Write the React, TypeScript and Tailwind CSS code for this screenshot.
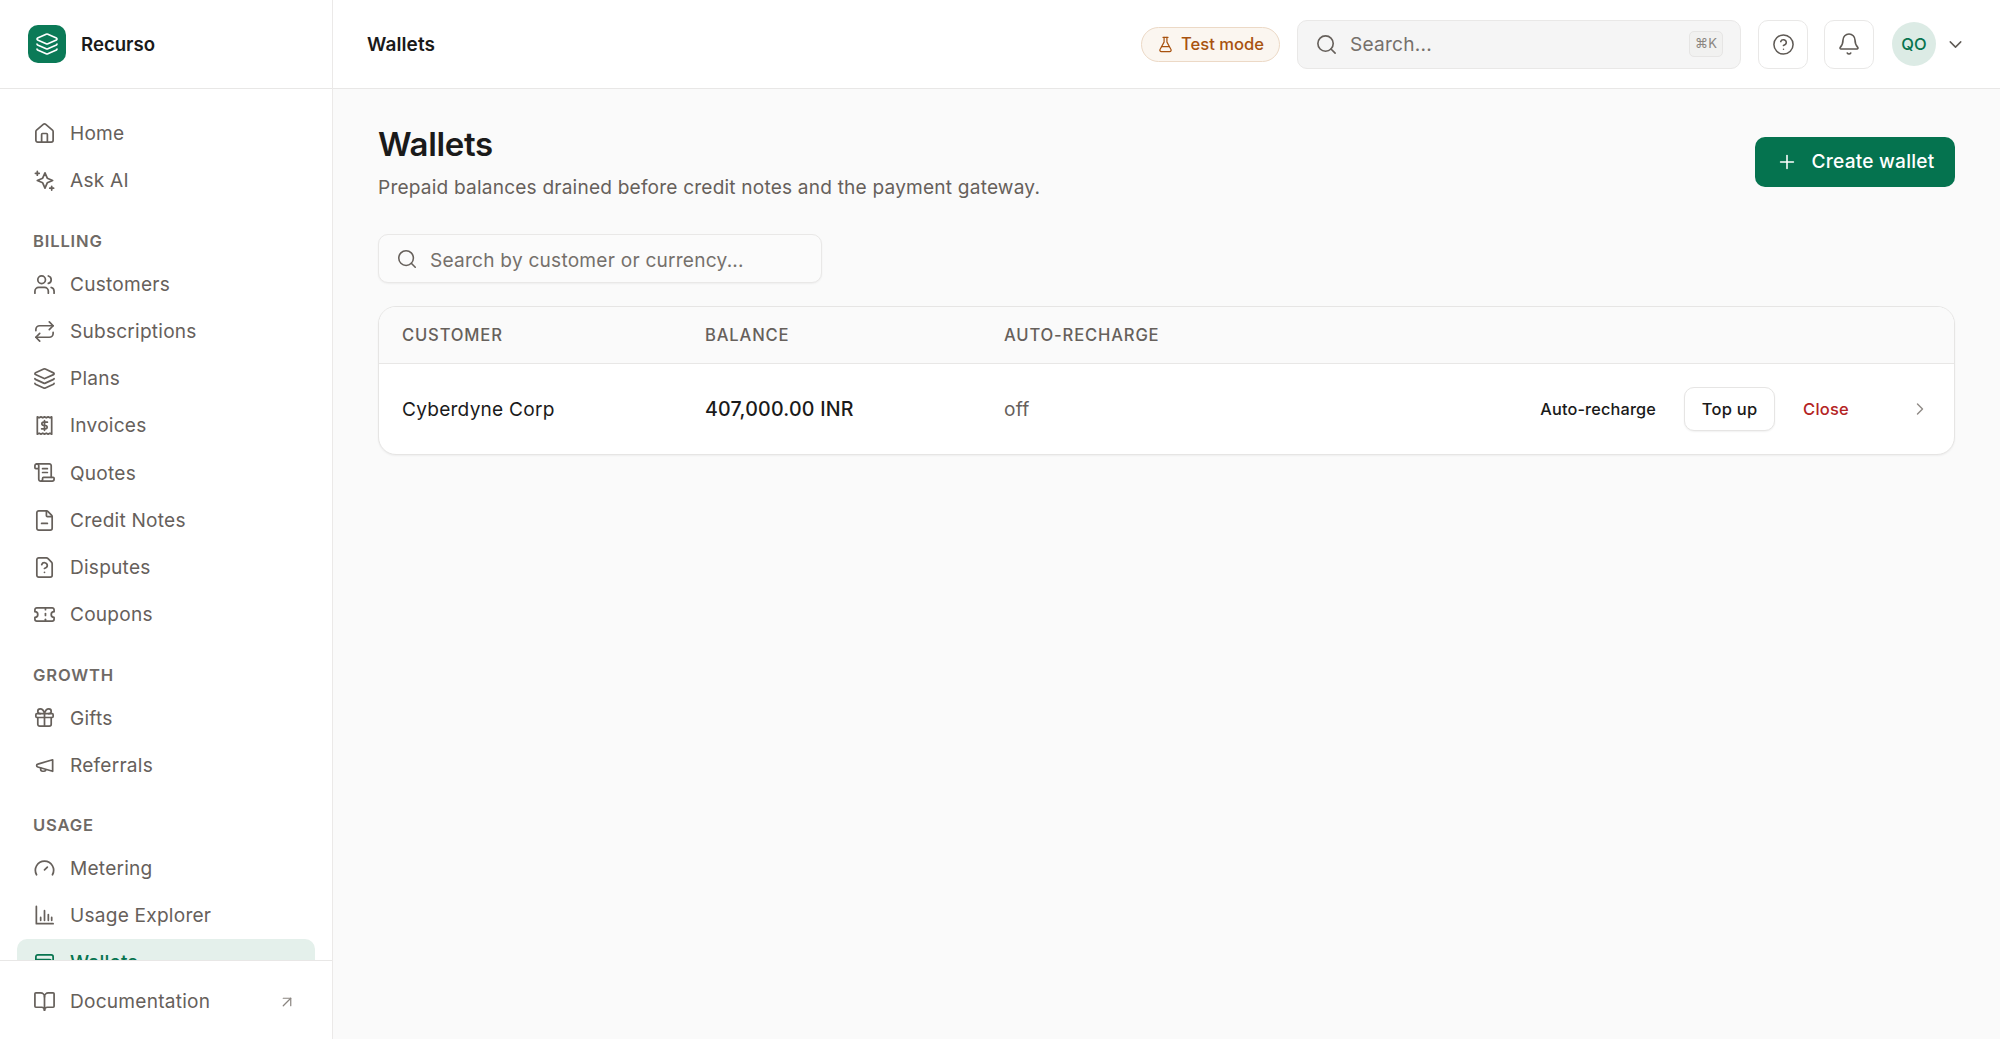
import {
  ArrowUpRight,
  Bell,
  BookOpen,
  ChevronDown,
  ChevronRight,
  CircleHelp,
  FileMinus,
  FileQuestionMark,
  FlaskConical,
  Gift,
  House,
  Layers,
  Plus,
  Repeat,
  ScrollText,
  Search,
  Ticket,
  Users,
} from 'lucide-react';
import type { ComponentType, ReactNode, SVGProps } from 'react';

type IconType = ComponentType<SVGProps<SVGSVGElement> & { size?: number; strokeWidth?: number }>;

function Svg({ children, ...props }: SVGProps<SVGSVGElement> & { children: ReactNode; size?: number; strokeWidth?: number }) {
  const { size = 24, strokeWidth = 2, ...rest } = props as { size?: number; strokeWidth?: number };
  return (
    <svg
      width={size}
      height={size}
      viewBox="0 0 24 24"
      fill="none"
      stroke="currentColor"
      strokeWidth={strokeWidth}
      strokeLinecap="round"
      strokeLinejoin="round"
      {...rest}
    >
      {children}
    </svg>
  );
}

const AskAiIcon: IconType = (p) => (
  <Svg {...p}>
    <path d="M12.500 4l2.400 5.600 5.600 2.400-5.600 2.400-2.400 5.600-2.400-5.600L4.500 12l5.600-2.400z" />
    <path d="M4.500 2.500v4M2.500 4.500h4M19.500 18v4M17.500 20h4" />
  </Svg>
);

const InvoiceIcon: IconType = (p) => (
  <Svg {...p}>
    <path d="M4.500 3l1.900 1 1.900-1 1.900 1 1.800-1 1.900 1 1.900-1 1.900 1 1.800-1v18l-1.800-1-1.900 1-1.900-1-1.900 1-1.800-1-1.900 1-1.900-1-1.900 1z" />
    <path d="M15 8.500h-4a1.750 1.750 0 0 0 0 3.500h2a1.750 1.750 0 0 1 0 3.500H9M12 7v10" />
  </Svg>
);

const ReferralIcon: IconType = (p) => (
  <Svg {...p}>
    <path d="M20.500 6L5 10.500a1.600 1.600 0 0 0 0 3.100l15.500 4.400z" />
    <path d="M8 14.500v1.500a2 2 0 0 0 2 2h1.500a2 2 0 0 0 2-1.500" />
  </Svg>
);

const MeteringIcon: IconType = (p) => (
  <Svg {...p}>
    <path d="M3.700 18.500A9.500 9.500 0 1 1 20.300 18.500" />
    <path d="M12 13.500l3-3" />
  </Svg>
);

const ExplorerIcon: IconType = (p) => (
  <Svg {...p}>
    <path d="M3.500 2.500V20.500H21" />
    <path d="M8 17v-3M12 17V7M16 17v-6M19.500 17v-3" />
  </Svg>
);

const WalletIcon: IconType = (p) => (
  <Svg {...p}>
    <rect x="3" y="4" width="18" height="16" rx="2" />
    <path d="M3 9h14a2 2 0 0 1 2 2" />
  </Svg>
);

interface NavItem {
  label: string;
  icon: IconType;
  active?: boolean;
}

interface NavGroup {
  title?: string;
  items: NavItem[];
}

const groups: NavGroup[] = [
  {
    items: [
      { label: 'Home', icon: House },
      { label: 'Ask AI', icon: AskAiIcon },
    ],
  },
  {
    title: 'Billing',
    items: [
      { label: 'Customers', icon: Users },
      { label: 'Subscriptions', icon: Repeat },
      { label: 'Plans', icon: Layers },
      { label: 'Invoices', icon: InvoiceIcon },
      { label: 'Quotes', icon: ScrollText },
      { label: 'Credit Notes', icon: FileMinus },
      { label: 'Disputes', icon: FileQuestionMark },
      { label: 'Coupons', icon: Ticket },
    ],
  },
  {
    title: 'Growth',
    items: [
      { label: 'Gifts', icon: Gift },
      { label: 'Referrals', icon: ReferralIcon },
    ],
  },
  {
    title: 'Usage',
    items: [
      { label: 'Metering', icon: MeteringIcon },
      { label: 'Usage Explorer', icon: ExplorerIcon },
      { label: 'Wallets', icon: WalletIcon, active: true },
    ],
  },
];

function NavLink({ item }: { item: NavItem }) {
  const Icon = item.icon;
  return (
    <a
      className={`flex h-[47.2px] shrink-0 items-center gap-[14px] rounded-[10px] px-4 text-[19.100px] tracking-[0.012em] ${
        item.active ? 'bg-[#e4f0eb] font-medium text-[#07744f]' : 'text-[#66605b]'
      }`}
    >
      <Icon size={23} strokeWidth={1.8} className="shrink-0" />
      <span>{item.label}</span>
    </a>
  );
}

function Sidebar() {
  return (
    <aside className="flex h-full w-[333px] shrink-0 flex-col border-r border-[#ebe9e8] bg-white">
      <div className="flex h-[89px] shrink-0 items-center gap-[15px] border-b border-[#e8e7e6] pl-[28px]">
        <div className="flex h-[38px] w-[38px] items-center justify-center rounded-[10px] bg-[#0b7a57] text-white">
          <Layers size={24} strokeWidth={1.6} />
        </div>
        <span className="pt-[2px] text-[18.600px] font-semibold text-[#1a1a1a]">Recurso</span>
      </div>
      <nav className="flex min-h-0 flex-1 flex-col overflow-hidden px-[17px] pt-[21px]">
        {groups.map((group) => (
          <div key={group.title ?? 'main'} className={`flex shrink-0 flex-col ${group.title ? 'mt-[18px]' : ''}`}>
            {group.title && (
              <div className="flex h-[38.2px] items-center px-4 text-[16.600px] font-semibold uppercase tracking-[0.05em] text-[#6f6a66]">
                {group.title}
              </div>
            )}
            {group.items.map((item) => (
              <NavLink key={item.label} item={item} />
            ))}
          </div>
        ))}
      </nav>
      <div className="flex h-[79px] shrink-0 items-center border-t border-[#e8e7e6] px-[17px] pt-[3px]">
        <a className="flex h-[47px] w-full items-center gap-[14px] px-4 text-[19.100px] tracking-[0.012em] text-[#66605b]">
          <BookOpen size={23} strokeWidth={1.8} className="shrink-0" />
          <span className="flex-1">Documentation</span>
          <ArrowUpRight size={18} strokeWidth={1.6} className="mr-[3px] text-[#8a8580]" />
        </a>
      </div>
    </aside>
  );
}

function Topbar() {
  return (
    <header className="flex h-[89px] shrink-0 items-center border-b border-[#e8e7e6] bg-white pl-[34px] pr-[34px]">
      <h2 className="flex-1 pt-[2px] text-[19px] font-semibold tracking-[0.005em] text-[#1a1a1a]">Wallets</h2>
      <div className="flex h-[35px] w-[139px] items-center justify-center gap-[7px] rounded-full border border-[#ecd9c6] bg-[#fbf6f0] text-[16.600px] font-medium text-[#a8520f]">
        <FlaskConical size={17} strokeWidth={1.7} />
        Test mode
      </div>
      <button className="ml-[17px] flex h-[49px] w-[444px] items-center gap-[12px] rounded-[10px] border border-[#e9e8e7] bg-[#f5f5f5] pl-[17px] pr-[17px] text-[19.100px] tracking-[0.012em] text-[#75706b]">
        <Search size={23} strokeWidth={1.7} className="text-[#66605b]" />
        <span className="flex-1 text-left">Search...</span>
        <kbd className="flex h-[26px] w-[34px] items-center justify-center rounded-[5px] border border-[#e6e5e4] bg-[#f1f1f0] font-['Inter',sans-serif] text-[13px] text-[#8a8580]">
          ⌘K
        </kbd>
      </button>
      <button className="ml-[17px] flex h-[49px] w-[50px] items-center justify-center rounded-[10px] border border-[#e9e8e7] bg-white text-[#5f5a55]">
        <CircleHelp size={23} strokeWidth={1.6} />
      </button>
      <button className="ml-[16px] flex h-[49px] w-[50px] items-center justify-center rounded-[10px] border border-[#e9e8e7] bg-white text-[#5f5a55]">
        <Bell size={24} strokeWidth={1.6} />
      </button>
      <div className="ml-[18px] flex h-[44px] w-[44px] items-center justify-center rounded-full bg-[#dcebe5] text-[16.500px] font-medium text-[#07744f]">
        QO
      </div>
      <ChevronDown size={21} strokeWidth={1.7} className="ml-[9px] text-[#5f5a55]" />
    </header>
  );
}

export default function App() {
  return (
    <div className="flex h-[1039px] w-[2000px] overflow-hidden bg-[#fafafa] font-['Inter',sans-serif] text-[#1a1a1a]">
      <Sidebar />
      <div className="flex min-w-0 flex-1 flex-col">
        <Topbar />
        <main className="flex flex-1 flex-col pl-[45px] pr-[45px] pt-[33px]">
          <div className="flex items-start justify-between">
            <div>
              <h1 className="text-[33px] font-semibold leading-[44px] tracking-[-0.01em] text-[#1a1a1a]">Wallets</h1>
              <p className="mt-[7px] text-[19.100px] leading-[28px] tracking-[0.01em] text-[#66605b]">
                Prepaid balances drained before credit notes and the payment gateway.
              </p>
            </div>
            <button className="mt-[14.500px] flex h-[50px] w-[200px] items-center justify-center gap-[14px] rounded-[10px] bg-[#05734f] text-[19.100px] tracking-[0.012em] font-medium text-white">
              <Plus size={22} strokeWidth={1.7} />
              Create wallet
            </button>
          </div>

          <div className="mt-[33px] flex h-[49px] w-[444px] items-center gap-[12px] rounded-[10px] border border-[#e9e8e7] bg-[#fbfbfb] pl-[17px] pr-3 shadow-[0_1px_2px_rgba(0,0,0,0.05)]">
            <Search size={22} strokeWidth={1.7} className="shrink-0 text-[#66605b]" />
            <input
              placeholder="Search by customer or currency..."
              className="w-full bg-transparent pt-[3px] text-[19.100px] tracking-[0.012em] outline-none placeholder:text-[#75706b]"
            />
          </div>

          <div className="mt-[23px] overflow-hidden rounded-[18px] border border-[#e6e5e4] bg-white shadow-[0_1px_2px_rgba(0,0,0,0.05)]">
            <div className="flex h-[57px] items-center border-b border-[#e8e7e6] bg-[#fafafa] pl-[23px] text-[16.600px] font-medium uppercase tracking-[0.05em] text-[#66605b]">
              <div className="w-[303px]">Customer</div>
              <div className="w-[299px]">Balance</div>
              <div>Auto-recharge</div>
            </div>
            <div className="flex h-[90px] items-center pl-[23px] text-[19.100px] tracking-[0.012em]">
              <div className="w-[303px] text-[#1a1a1a]">Cyberdyne Corp</div>
              <div className="w-[299px] pt-[1px] text-[19.600px] font-medium text-[#1a1a1a]">407,000.00 INR</div>
              <div className="flex-1 text-[#66605b]">off</div>
              <button className="text-[16.300px] font-medium tracking-[0.01em] text-[#1a1a1a]">Auto-recharge</button>
              <button className="ml-[28px] flex h-[44px] w-[91px] items-center justify-center rounded-[10px] border border-[#e6e5e4] bg-white text-[16.500px] font-medium text-[#1a1a1a] shadow-[0_1px_2px_rgba(0,0,0,0.06)]">
                Top up
              </button>
              <button className="ml-[28px] text-[16.500px] font-medium text-[#b42323]">Close</button>
              <ChevronRight size={20} strokeWidth={1.7} className="ml-[61px] mr-[24px] text-[#908b87]" />
            </div>
          </div>
        </main>
      </div>
    </div>
  );
}
